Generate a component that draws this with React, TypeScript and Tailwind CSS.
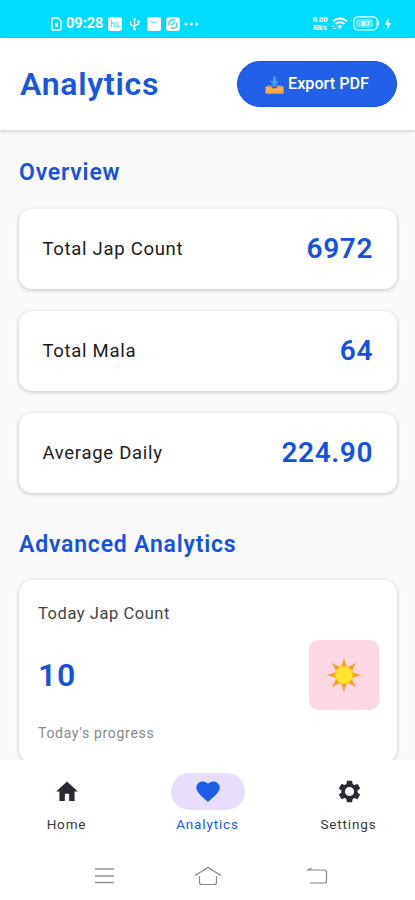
import type { ReactNode } from 'react';

interface Stat {
  label: string;
  value: string;
}

interface Tab {
  label: string;
  icon: ReactNode;
  active?: boolean;
}

const stats: Stat[] = [
  { label: 'Total Jap Count', value: '6972' },
  { label: 'Total Mala', value: '64' },
  { label: 'Average Daily', value: '224.90' },
];

const tabs: Tab[] = [
  { label: 'Home', icon: <HomeIcon /> },
  { label: 'Analytics', icon: <HeartIcon />, active: true },
  { label: 'Settings', icon: <GearIcon /> },
];

function HomeIcon() {
  return (
    <svg width="26" height="27" viewBox="0 0 24 24" preserveAspectRatio="none" fill="#2b2933">
      <path d="M10 20.500v-6.500h4v6.500h5v-8.500h3L12 3 2 12h3v8.500z" />
    </svg>
  );
}

function HeartIcon() {
  return (
    <svg width="28" height="27" viewBox="0 0 24 24" preserveAspectRatio="none" fill="#1b5de6">
      <path d="M12 21.35l-1.45-1.32C5.4 15.36 2 12.28 2 8.5 2 5.42 4.42 3 7.5 3c1.74 0 3.41.81 4.5 2.09C13.09 3.81 14.76 3 16.5 3 19.58 3 22 5.42 22 8.5c0 3.78-3.4 6.86-8.55 11.54L12 21.35z" />
    </svg>
  );
}

function GearIcon() {
  return (
    <svg className="ml-px" width="27" height="27" viewBox="0 0 24 24" fill="#2b2933">
      <path
        fillRule="evenodd"
        d="M19.14 12.94c.04-.3.06-.61.06-.94 0-.32-.02-.64-.07-.94l2.03-1.58a.49.49 0 0 0 .12-.61l-1.92-3.32a.49.49 0 0 0-.59-.22l-2.39.96c-.5-.38-1.03-.7-1.62-.94l-.36-2.54a.48.48 0 0 0-.48-.41h-3.84c-.24 0-.43.17-.47.41l-.36 2.54c-.59.24-1.13.57-1.62.94l-2.39-.96a.48.48 0 0 0-.59.22L2.74 8.87c-.12.21-.08.47.12.61l2.03 1.58c-.05.3-.09.63-.09.94s.02.64.07.94l-2.03 1.58a.49.49 0 0 0-.12.61l1.92 3.32c.12.22.37.29.59.22l2.39-.96c.5.38 1.03.7 1.62.94l.36 2.54c.05.24.24.41.48.41h3.84c.24 0 .44-.17.47-.41l.36-2.54c.59-.24 1.13-.56 1.62-.94l2.39.96c.22.08.47 0 .59-.22l1.92-3.32a.49.49 0 0 0-.12-.61l-2.01-1.58zM12 16.1a4.1 4.1 0 1 1 0-8.2 4.1 4.1 0 0 1 0 8.2z"
      />
    </svg>
  );
}

function StatusBar() {
  return (
    <div className="flex h-[38px] shrink-0 items-start justify-between bg-[#00dcff] pt-4 pr-[23px] pl-[51px] text-white">
      <div className="flex h-[15px] items-center">
        <svg width="11" height="14" viewBox="0 0 11 14" fill="none" stroke="#fff" strokeWidth="1.4">
          <path d="M1 2.2Q1 1 2.2 1H7l3 3v7.8q0 1.2-1.2 1.2H2.2Q1 13 1 11.800z" />
          <path d="M4 6h3v4H4z" fill="#fff" stroke="none" />
        </svg>
        <span className="ml-1 w-[38px] text-[14.500px] leading-[15px] font-bold whitespace-nowrap">09:28</span>
        <svg className="ml-1" width="14" height="14" viewBox="0 0 14 14">
          <rect width="14" height="14" rx="3" fill="#fff" />
          <path d="M3.500 3v7M3.500 7q2.500-2 3 0v3M7 5q3 0 3 3l1 2M8 9.500h3" stroke="#5be2fb" strokeWidth="1.200" fill="none" />
        </svg>
        <svg className="ml-[7px]" width="11" height="14" viewBox="0 0 11 14" fill="none" stroke="#fff" strokeWidth="1.3">
          <path d="M5.500 2v10M5.500 10 1.500 7.500V5M5.500 9l4-2V4.500" />
          <path d="M3.700 3 5.500.5 7.300 3z" fill="#fff" stroke="none" />
          <circle cx="5.500" cy="12.300" r="1.300" fill="#fff" stroke="none" />
          <circle cx="1.500" cy="5" r="1" fill="#fff" stroke="none" />
          <path d="M8.300 3.500h2.400v2.400H8.300z" fill="#fff" stroke="none" />
        </svg>
        <svg className="ml-[7px]" width="14" height="14" viewBox="0 0 14 14">
          <rect width="14" height="14" rx="2" fill="#fff" />
          <path d="M4 3.500Q4.500 5.800 7 5.800T10 3.500" stroke="#5be2fb" strokeWidth="1" fill="none" />
        </svg>
        <svg className="ml-[5px]" width="14" height="14" viewBox="0 0 14 14">
          <rect width="14" height="14" rx="3.500" fill="#fff" />
          <path d="M3 8V6q0-3 4-3h2M11 6v2q0 3-4 3H5M5 8.500 9.500 5" stroke="#22dcfb" strokeWidth="1.400" fill="none" />
        </svg>
        <svg className="ml-1" width="15" height="4" viewBox="0 0 15 4" fill="#fff">
          <circle cx="2" cy="2" r="1.500" />
          <circle cx="7.300" cy="2" r="1.500" />
          <circle cx="12.600" cy="2" r="1.500" />
        </svg>
      </div>
      <div className="flex h-[15px] items-center">
        <div className="w-4 text-center text-[7.500px] leading-[8px] font-bold tracking-[-0.1px] whitespace-nowrap">
          <div className="h-2">0.00</div>
          <div className="h-2 text-[6.500px]">KB/s</div>
        </div>
        <svg className="ml-1" width="16" height="13" viewBox="0 0 16 13" fill="none" stroke="#fff" strokeWidth="2">
          <path d="M1 4.300q7-5.500 14 0M3.500 7q4.500-3.500 9 0" />
          <path d="M5.500 9q2.500-2 5 0L8 12z" fill="#fff" stroke="none" />
          <path d="M.5 9.500h2M1.500 11.500h3" strokeWidth="1.200" />
        </svg>
        <svg className="ml-[5px]" width="27" height="15" viewBox="0 0 27 15">
          <rect x=".8" y=".8" width="23.400" height="13" rx="4" fill="none" stroke="#fff" strokeWidth="1.300" />
          <rect x="3" y="3" width="17" height="8.600" rx="2" fill="#fff" fillOpacity=".35" />
          <path d="M25 5q1.500 2.300 0 4.600z" fill="#fff" stroke="#fff" />
          <text x="12.500" y="10.300" fill="#fff" fontSize="8" fontWeight="700" textAnchor="middle">87</text>
        </svg>
        <svg className="ml-1" width="8" height="12" viewBox="0 0 8 12" fill="#fff">
          <path d="M4.500 0 .8 6.800h2.700L3 12l4.200-7H4.500z" />
        </svg>
      </div>
    </div>
  );
}

function InboxTray() {
  return (
    <svg className="mt-0.5" width="19" height="19" viewBox="0 0 19 19">
      <path d="M1.500 10.500 3 9h13l1.500 1.500z" fill="#b9774c" />
      <path d="M.5 10.500h5.300q.7 0 1 .8.500 1.300 2.700 1.300t2.700-1.300q.3-.8 1-.8h5.300v6q0 1-1 1h-16q-1 0-1-1z" fill="#fbb147" />
      <path d="M.5 15.500h18v1q0 1-1 1h-16q-1 0-1-1z" fill="#f2a04a" />
      <path d="M8 .5h3V5h3L9.500 10 5 5h3z" fill="#3fa0ee" />
    </svg>
  );
}

function Sun() {
  return (
    <svg width="36" height="36" viewBox="-18 -18 36 36">
      {[0, 45, 90, 135, 180, 225, 270, 315].map(angle => (
        <path key={angle} d="M-3.200-8Q-1-12 0-17.600 1-12 3.200-8z" fill="#f59f1c" transform={`rotate(${angle})`} />
      ))}
      <circle r="8.800" fill="#ffe52e" stroke="#fbc62c" strokeWidth=".8" />
    </svg>
  );
}

function StatCard({ label, value }: Stat) {
  return (
    <div className="flex h-20 items-center justify-between rounded-[13px] bg-white pr-6 pl-[23.500px] shadow-[0_1px_4px_rgba(0,0,0,0.24)]">
      <span className="pt-[2px] text-[18.500px] tracking-[0.7px] text-[#1c1c1e]">{label}</span>
      <span className="text-[28px] font-semibold tracking-[0.6px] text-[#1552e0]">{value}</span>
    </div>
  );
}

function TabBar() {
  return (
    <nav className="grid grid-cols-3 gap-2 pt-[13px]">
      {tabs.map(({ label, icon, active }) => (
        <div key={label} className="flex flex-col items-center">
          <div className={`flex h-[37px] w-[74px] items-center justify-center rounded-full ${active ? 'bg-[#e8ddfd]' : ''}`}>
            {icon}
          </div>
          <span
            className={`mt-[5px] text-[13.500px] leading-[18px] tracking-[0.85px] ${active ? 'text-[#2158e8]' : 'text-[#38373d]'}`}
          >
            {label}
          </span>
        </div>
      ))}
    </nav>
  );
}

function SystemNav() {
  return (
    <div className="flex h-[30px] items-center pl-[94px]">
      <svg width="21" height="18" viewBox="0 0 21 18" stroke="#929292" strokeWidth="1.400">
        <path d="M1 2h19M1 9h19M1 15.500h19" />
      </svg>
      <svg className="ml-[79px]" width="28" height="20" viewBox="0 0 28 20" fill="none" stroke="#858585" strokeWidth="1.200">
        <path d="M1 9.500 14 1.500l13 8M5.500 10v6.500q0 2 2 2h13q2 0 2-2V10" />
      </svg>
      <svg className="ml-[84px]" width="23" height="18" viewBox="0 0 23 18" fill="none" stroke="#858585" strokeWidth="1.200">
        <path d="M5.500 1 2 3h16.500q2 0 2 2v9q0 2-2 2H4" />
      </svg>
    </div>
  );
}

export default function App() {
  return (
    <div className="flex h-[900px] w-[415px] flex-col overflow-hidden bg-[#fafafa] font-[Roboto,sans-serif]">
      <StatusBar />
      <header className="z-10 flex h-[92px] shrink-0 items-center justify-between bg-white pr-[18px] pl-5 shadow-[0_1px_4px_rgba(0,0,0,0.2)]">
        <h1 className="text-[32px] leading-10 font-semibold tracking-[0.75px] text-[#1a56e2]">Analytics</h1>
        <button className="flex h-[46px] w-40 items-center justify-center gap-1 rounded-full border border-[#1450d8] bg-[#2260ea] pt-px text-[16.200px] font-medium whitespace-nowrap text-white">
          <InboxTray />
          Export PDF
        </button>
      </header>
      <main className="min-h-0 flex-1 overflow-hidden pr-[18px] pl-[19px]">
        <h2 className="mt-[29px] text-[23px] leading-7 font-semibold tracking-[0.8px] text-[#1552e0]">Overview</h2>
        <div className="mt-[22px] flex flex-col gap-[22px]">
          {stats.map(stat => (
            <StatCard key={stat.label} {...stat} />
          ))}
        </div>
        <h2 className="mt-[38px] text-[23px] leading-7 font-semibold tracking-[0.8px] text-[#1552e0]">
          Advanced Analytics
        </h2>
        <div className="mt-[21px] flex h-[183px] flex-col rounded-[14px] bg-white pt-6 pr-[18px] pl-[19px] shadow-[0_1px_4px_rgba(0,0,0,0.22)]">
          <span className="text-[16.500px] leading-5 tracking-[0.55px] text-[#454545]">Today Jap Count</span>
          <div className="mt-4 flex items-center justify-between">
            <span className="text-[32px] leading-9 font-semibold tracking-[0.7px] text-[#1552e0]">10</span>
            <div className="flex size-[70px] items-center justify-center rounded-[9px] bg-[#fdd8e4]">
              <Sun />
            </div>
          </div>
          <span className="mt-[13px] text-[14px] leading-5 tracking-[0.7px] text-[#8a8a8a]">Today's progress</span>
        </div>
      </main>
      <footer className="flex h-[140px] shrink-0 flex-col bg-white">
        <TabBar />
        <div className="mt-[28px]">
          <SystemNav />
        </div>
      </footer>
    </div>
  );
}
